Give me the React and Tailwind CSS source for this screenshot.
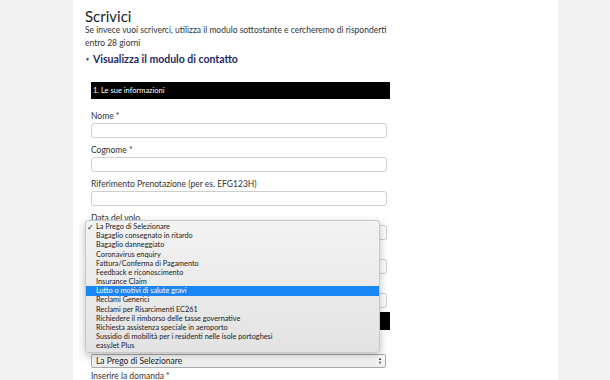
import React from 'react';

const font = { fontFamily: 'Lato, "Liberation Sans", sans-serif' };

const options = [
    'La Prego di Selezionare',
    'Bagaglio consegnato in ritardo',
    'Bagaglio danneggiato',
    'Coronavirus enquiry',
    'Fattura/Conferma di Pagamento',
    'Feedback e riconoscimento',
    'Insurance Claim',
    'Lutto o motivi di salute gravi',
    'Reclami Generici',
    'Reclami per Risarcimenti EC261',
    'Richiedere il rimborso delle tasse governative',
    'Richiesta assistenza speciale in aeroporto',
    'Sussidio di mobilità per i residenti nelle isole portoghesi',
    'easyJet Plus',
];

// label + text input (labels under the open menu stay empty)
const Field = ({ label }) => (
    <div className="flex flex-col">
        <label className="h-[12px] text-[8.5px] leading-[12px] text-[#333]">{label}</label>
        <div className="mt-[1px] h-[15px] w-[296px] rounded-[3px] border border-[#cfcfcf] bg-white" />
    </div>
);

const App = () => {
    return (
        <div className="flex h-[380px] w-[610px] overflow-hidden bg-[#f2f2f2]" style={font}>
            <div className="relative ml-[73px] w-[485px] bg-white pl-[12px] pt-[7px]">
                {/* --- intro --- */}
                <h1 className="text-[15px] leading-[18px] text-[#1e1e1e]">Scrivici</h1>
                <p className="-mt-[1px] w-[305px] text-[8.5px] leading-[12.5px] text-[#333]">
                    Se invece vuoi scriverci, utilizza il modulo sottostante e cercheremo di risponderti entro 28 giorni
                </p>
                <div className="mt-[3px] flex items-center gap-[3px] text-[10.5px] font-bold leading-[14px] text-[#1b2a63]">
                    <span className="text-[5px] leading-none">▼</span>
                    Visualizza il modulo di contatto
                </div>

                {/* --- form --- */}
                <div className="ml-[6px] mt-[16px] w-[299px]">
                    <div className="flex h-[17px] items-center bg-black pl-[2px] text-[7.5px] text-white">1. Le sue informazioni</div>
                    <div className="mt-[11px] flex flex-col gap-[6px]">
                        <Field label="Nome *" />
                        <Field label="Cognome *" />
                        <Field label="Riferimento Prenotazione (per es. EFG123H)" />
                        <Field label="Data del volo" />
                        <Field label="" />
                        <Field label="" />
                    </div>
                    <div className="mt-[4px] h-[18px] bg-black" />
                    <div className="mt-[6px] h-[12px]" />
                    <div className="mt-[6px] flex h-[14px] w-[295px] items-center justify-between rounded-[2px] border border-[#a9a9a9] bg-gradient-to-b from-white to-[#ececec] pl-[4px] pr-[3px] text-[8.5px] text-[#222]">
                        La Prego di Selezionare
                        <span className="flex flex-col text-[4px] leading-[4px] text-[#333]">
                            <span>▲</span>
                            <span>▼</span>
                        </span>
                    </div>
                    <div className="mt-[2px] h-[12px] text-[8.5px] leading-[12px] text-[#333]">Inserire la domanda *</div>
                </div>

                {/* --- open select menu --- */}
                <div className="absolute left-[12px] top-[220px] w-[295px] rounded-[3px] border border-[#c8c8c8] bg-gradient-to-b from-[#f3f3f3] to-[#e3e3e3] py-[1px] shadow-[0_3px_8px_rgba(0,0,0,0.25)]">
                    {options.map((opt, i) => (
                        <div
                            key={opt}
                            className={`relative flex h-[9.2px] items-center pl-[10px] text-[7.3px] leading-none ${i === 7 ? 'bg-[#1a86f5] text-white' : 'text-[#1a1a1a]'}`}
                        >
                            {i === 0 && <span className="absolute left-[1px] text-[8px]">✓</span>}
                            {opt}
                        </div>
                    ))}
                </div>
            </div>
        </div>
    );
};

export default App;
